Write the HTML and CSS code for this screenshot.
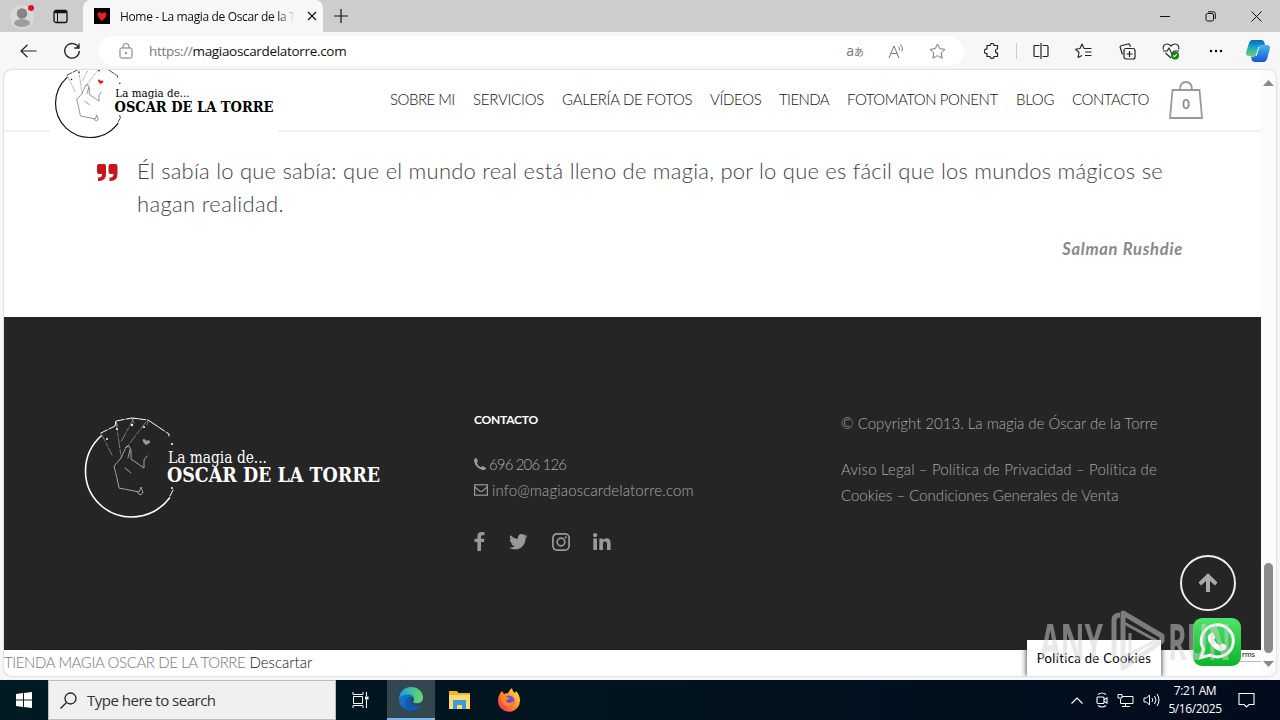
FILE: index.html
```html
<!DOCTYPE html>
<html lang="es">
<head>
  <meta charset="UTF-8" />
  <meta name="viewport" content="width=device-width, initial-scale=1.0"/>
  <title>Home - La magia de Oscar de la Torre</title>
  <link rel="stylesheet" href="styles.css">
</head>
<body>
  <svg class="defs" width="0" height="0">
    <symbol id="logo" viewBox="0 0 298 105">
      <g fill="none" stroke="currentColor" stroke-linecap="round">
        <path d="M17 22C5 33 1.500 45 1.500 57c0 26 21 46 46 46 15 0 29-7 38-19" stroke-width="1.600"/>
        <path d="M86 82l3-6" stroke-width="1"/>
        <path d="M17 19l14-7 1-5 16-3 8 1 8 1 21 14v2" stroke-width="1" stroke-dasharray="7 2 12 1"/>
        <path d="M17 19l11 22M32 8l5 34M50 4L37 28M62 8L42 34M32 8l2 4M48 5l2 4M64 6l-1 5" stroke-width=".4" stroke-dasharray="9 2 4 2"/>
        <path d="M37 44l5-11 3-1 2 4 0 9 13 9 0-8 3-4M37 44l-7 8 3 12 2 10 20 4 2-5 2 6-3 2-3-3M41 54l6 5M46 36l-2 8" stroke-width=".6" stroke-dasharray="6 1 3 1"/>
      </g>
      <path class="logo-heart" d="M62 31c-4-3-4-6-2-6 1 0 2 1 2 2 1-1 4-1 4 1 0 1-2 2-4 3z"/>
      <g fill="currentColor">
        <circle cx="23" cy="25" r="1"/><circle cx="33" cy="15" r="1"/><circle cx="48" cy="11" r="1.2"/><circle cx="60" cy="13" r="1"/>
        <circle cx="88" cy="30" r="1"/><circle cx="88" cy="74" r="1"/>
      </g>
    </symbol>
  </svg>

  <div class="tabbar">
    <svg class="profile" width="26" height="26" viewBox="0 0 26 26"><circle cx="12" cy="14" r="12" fill="#d8d8d8"/><circle cx="12" cy="10.500" r="5.200" fill="#858585"/><ellipse cx="12" cy="20" rx="8" ry="4" fill="#9d9d9d"/><circle cx="21" cy="5" r="3" fill="#e81123"/></svg>
    <svg class="workspaces" width="15" height="15" viewBox="0 0 15 15" fill="none" stroke="#111"><rect x="1" y="1.500" width="13" height="12" rx="2" stroke-width="1.300"/><path d="M1.500 3h12" stroke-width="2.500"/><path d="M4.500 4v9"/></svg>
    <div class="tab">
      <svg width="16" height="16" viewBox="0 0 16 16"><rect width="16" height="16"/><path d="M8 13C5 10 3.500 8.500 3.500 6.500 3.500 4 7 3.500 8 6c1-2.500 4.500-2 4.500.5C12.500 8.500 11 10 8 13z" fill="#ed1c24"/></svg>
      <span class="tab-title">Home - La magia de Oscar de la T</span>
      <svg width="10" height="10" viewBox="0 0 10 10" stroke="#111" stroke-width="1.200"><path d="M1 1l8 8M9 1l-8 8"/></svg>
    </div>
    <svg class="new-tab" width="14" height="14" viewBox="0 0 14 14" stroke="#111" stroke-width="1.200"><path d="M7 0v14M0 7h14"/></svg>
    <div class="window-buttons">
      <svg width="10" height="10" viewBox="0 0 10 10" stroke="#111"><path d="M0 5.500h10"/></svg>
      <svg width="11" height="11" viewBox="0 0 11 11" fill="none" stroke="#111"><rect x="1" y="2.500" width="7.500" height="7.500" rx="1.500"/><path d="M3 .8h5.500q1.800 0 1.800 1.800V8"/></svg>
      <svg width="11" height="11" viewBox="0 0 11 11" stroke="#111"><path d="M.5.5l10 10M10.500.5l-10 10"/></svg>
    </div>
  </div>

  <div class="toolbar">
    <svg class="back" width="17" height="14" viewBox="0 0 17 14" fill="none" stroke="#222" stroke-width="1.200"><path d="M16.500 7H1M7.500.8L1 7l6.500 6.200"/></svg>
    <svg class="reload" width="18" height="18" viewBox="0 0 18 18" fill="none" stroke="#222" stroke-width="1.300"><path d="M15.500 5.500A7.300 7.300 0 1 0 16.300 9M16 1.500v4.500h-4.700"/></svg>
    <div class="address">
      <svg width="14" height="16" viewBox="0 0 14 16" fill="none" stroke="#777"><rect x="1" y="5" width="12" height="10" rx="1.500"/><path d="M4 5V3.500a3 3 0 0 1 6 0V5"/><circle cx="7" cy="10" r=".6" fill="#555"/></svg>
      <div class="url"><span>https://</span>magiaoscardelatorre.com</div>
      <span class="translate">a<small>あ</small></span>
      <svg class="read" width="17" height="16" viewBox="0 0 17 16" fill="none" stroke="#777"><path d="M1 15L6 3l5 12M3 10.500h6.200M10.500 3.500q1.500 1.500.8 4M12.500 1.500q3 3 1.500 7"/></svg>
      <svg class="star" width="17" height="16" viewBox="0 0 17 16" fill="none" stroke="#777" stroke-linejoin="round"><path d="M8.500 1l2.300 4.700 5.200.7-3.800 3.600.9 5.200-4.600-2.500-4.600 2.500.9-5.200L1 6.400l5.200-.7z"/></svg>
    </div>
    <div class="tools">
      <svg width="16" height="16" viewBox="0 0 16 16" fill="none" stroke="#222" stroke-width="1.200" stroke-linejoin="round"><path d="M3 2.500h3a2 2 0 0 1 4 0h3.500V6a2 2 0 0 0 0 4v3.500H10a2 2 0 0 1-4 0H3V10.500a2.300 2.300 0 1 1 0-4.500z"/></svg>
      <i class="divider"></i>
      <svg width="16" height="16" viewBox="0 0 16 16" fill="none" stroke="#222" stroke-width="1.200"><path d="M6.500 2.500H2q-1 0-1 1v9q0 1 1 1h4.500M9.500 2.500H14q1 0 1 1v9q0 1-1 1H9.500M8 0v16"/></svg>
      <svg width="17" height="16" viewBox="0 0 17 16" fill="none" stroke="#222" stroke-width="1.100" stroke-linejoin="round"><path d="M9 5.500L7 1 5 5.500l-4.500.7L4 9.500l-1 5 4-2M9 5.500h7.500M10 9h6.500M10 12.500h6.500"/></svg>
      <svg width="17" height="17" viewBox="0 0 17 17" fill="none" stroke="#222" stroke-width="1.200"><rect x="5" y="5.500" width="11" height="10.500" rx="2"/><path d="M10.500 8v6M7.500 11h6M3.500 11.500L1.200 4.500q-.4-1.300 1-1.800L9 1q1.200-.3 1.700.8l.8 2"/></svg>
      <svg width="18" height="17" viewBox="0 0 18 17" fill="none" stroke="#222" stroke-width="1.100"><path d="M1.300 6.500C.5 3 2.500 1 5 1c2 0 3 1 4 2 1-1 2-2 4-2 2.500 0 4.500 2 3.700 5.500M3.500 10L9 15M1 8h4l2-3 3 6 2-3h5"/><circle cx="13" cy="12.500" r="4" fill="#13801c" stroke="none"/><path d="M11.300 12.500l1.200 1.200 2.300-2.600" stroke="#fff"/></svg>
      <svg class="more" width="14" height="4" viewBox="0 0 14 4"><circle cx="2" cy="2" r="1.200"/><circle cx="7" cy="2" r="1.200"/><circle cx="12" cy="2" r="1.200"/></svg>
      <svg class="copilot" width="24" height="22" viewBox="0 0 24 22"><defs><linearGradient id="cp1" x2="0" y2="1"><stop offset="0" stop-color="#0b63c4"/><stop offset=".45" stop-color="#21a4c4"/><stop offset="1" stop-color="#5dd86b"/></linearGradient><linearGradient id="cp2" x2="0" y2="1"><stop offset="0" stop-color="#45b8ee"/><stop offset="1" stop-color="#1557d6"/></linearGradient></defs><path d="M6 0h9q3 0 3.500 3l.5 2h-3q-2 0-2.500 2l-2 6q-1 3-4 3H3Q-.5 16 .2 12L3 3Q4 0 6 0z" fill="url(#cp1)"/><path d="M18 22H9q-3 0-3.500-3L5 16.500h2.500q2 0 2.500-2l2-6.500q1-3 4-3h5q3.500 0 2.800 4L21 19q-1 3-3 3z" fill="url(#cp2)"/><path d="M13.500 7l-3 9H9.500l3-9z" fill="#fff"/></svg>
    </div>
  </div>

  <div class="viewport">
    <div class="page">
      <header class="site-header">
        <svg class="header-logo" width="228" height="78" viewBox="-5 0 305 105">
          <use href="#logo" width="298" height="105"/>
          <text x="82" y="49" font-size="16" textLength="100" lengthAdjust="spacingAndGlyphs">La magia de...</text>
          <text x="81" y="68" font-size="20" font-weight="bold" textLength="214" lengthAdjust="spacingAndGlyphs">OSCAR DE LA TORRE</text>
        </svg>
        <nav class="menu">
          <a class="m1">SOBRE MI</a>
          <a class="m2">SERVICIOS</a>
          <a class="m3">GALERÍA DE FOTOS</a>
          <a class="m4">VÍDEOS</a>
          <a class="m5">TIENDA</a>
          <a class="m6">FOTOMATON PONENT</a>
          <a class="m7">BLOG</a>
          <a class="m8">CONTACTO</a>
        </nav>
        <div class="cart">
          <svg width="36" height="40" viewBox="0 0 36 40" fill="none" stroke="#999" stroke-width="1.800"><path d="M4.500 10h27l2.500 28h-32zM12 10q0-8 6-8t6 8"/></svg>
          <span>0</span>
        </div>
      </header>

      <section class="quote">
        <svg width="21" height="18" viewBox="0 0 21 18" fill="#c4161c"><path id="q" d="M2 0h5q2 0 2 2v8q0 7-7 7H1v-3.500h1q3 0 3-3.500H2Q0 10 0 8V2Q0 0 2 0z"/><use href="#q" x="11.500"/></svg>
        <div class="quote-body">
          <p><span class="q1">Él sabía lo que sabía: que el mundo real está lleno de magia, por lo que es fácil que los mundos mágicos se</span><br><span class="q2">hagan realidad.</span></p>
          <cite>Salman Rushdie</cite>
        </div>
      </section>

      <footer class="site-footer">
        <div class="footer-brand">
          <svg width="298" height="105" viewBox="0 0 298 105">
            <use href="#logo"/>
            <text x="84" y="49" font-size="16" textLength="99" lengthAdjust="spacingAndGlyphs">La magia de...</text>
            <text x="83" y="68" font-size="20" font-weight="bold" textLength="213" lengthAdjust="spacingAndGlyphs">OSCAR DE LA TORRE</text>
          </svg>
        </div>
        <div class="contact">
          <h4>CONTACTO</h4>
          <p class="phone"><svg width="12" height="12" viewBox="0 0 12 12" fill="#999"><path d="M0 2Q0 .5 2 0l.8.300L4 3.500 2.800 5q1.200 3 4.200 4.200L8.500 8l3.200 1.400q.6.600-.2 2-1.500 1-3.500.3Q1.500 9.500.3 4 0 3 0 2z"/></svg> <span>696 206 126</span></p>
          <p class="mail"><svg width="14" height="12" viewBox="0 0 14 12" fill="none" stroke="#999" stroke-width="1.200"><rect x=".6" y=".8" width="12.800" height="10.400"/><path d="M.8 3l4.700 4q1.500 1 3 0l4.700-4"/></svg> <span>info@magiaoscardelatorre.com</span></p>
          <div class="social">
            <svg width="11" height="19" viewBox="0 0 11 19"><path d="M10.500.2v3H8.700C7.300 3.200 7 3.800 7 4.700v2.100h3.400L10 10H7v9H3.400v-9H.5V6.800h2.900V4.200C3.400 1.400 5.200 0 7.800 0q1.700 0 2.700.2z"/></svg>
            <svg class="tw" width="19" height="16" viewBox="0 0 19 16"><path d="M18.500 2.200l-2 2C16.700 11 11.500 15.500 6 15.500q-3.300 0-6-1.700 3.200.2 5.600-1.600-2.600-.3-3.500-2.700h1.600Q.8 8.500.8 5.300l1.600.5Q0 3.700 1.400.9 4.300 4.400 9 4.700C8.400 2 10.400.1 12.700.1q1.600 0 2.700 1.200l2.300-.9-1.500 2.100z"/></svg>
            <svg class="ig" width="18" height="18" viewBox="0 0 18 18"><rect x=".9" y=".9" width="16.200" height="16.200" rx="4" fill="none" stroke="#999" stroke-width="1.700"/><circle cx="9" cy="9" r="3.800" fill="none" stroke="#999" stroke-width="1.700"/><circle cx="13.700" cy="4.400" r="1.100"/></svg>
            <svg class="in" width="18" height="17" viewBox="0 0 18 17"><path d="M.3 5.500H4V17H.3zM6.300 5.500h3.600v1.600q1.300-1.900 3.700-1.900 4 0 4 5V17H14v-6.200Q14 8.200 12 8.200T9.900 11v6H6.300z"/><circle cx="2.100" cy="2.200" r="2.100"/></svg>
          </div>
        </div>
        <div class="legal">
          <p><span class="l1">© Copyright 2013. La magia de Óscar de la Torre</span></p>
          <p><span class="l2">Aviso Legal – Política de Privacidad – Política de</span><br><span class="l3">Cookies – Condiciones Generales de Venta</span></p>
        </div>
      </footer>

      <div class="store-notice"><span>TIENDA MAGIA OSCAR DE LA TORRE</span> <a>Descartar</a></div>

      <div class="recaptcha">rms</div>
      <div class="cookies">Política de Cookies</div>
      <div class="to-top"><svg width="20" height="20" viewBox="0 0 20 20" fill="none" stroke="#aaa" stroke-width="4"><path d="M10 19V4M1.800 11L10 3l8.200 8"/></svg></div>
      <svg class="whatsapp" width="48" height="48" viewBox="0 0 48 48"><defs><linearGradient id="wa" x2="0" y2="1"><stop offset="0" stop-color="#4fe46a"/><stop offset="1" stop-color="#0cb528"/></linearGradient></defs><rect width="48" height="48" rx="9" fill="url(#wa)"/><path d="M8 39.500l2.600-8.500A16 16 0 1 1 17 37z" fill="none" stroke="#fff" stroke-width="3"/><path d="M18 15q1.500-1 2.500.2l2 4.300-1.500 2.500q2 4 6 5.500l2-2.200 4.500 2.300q0 5-5 5.300-5 0-9.500-5-5.500-6-4-10 1-2 3-2.900z" fill="#fff"/></svg>
    </div>
    <div class="scrollbar">
      <svg width="11" height="6" viewBox="0 0 11 6"><path d="M5.500 0L11 6H0z" fill="#8a8a8a"/></svg>
      <i class="thumb"></i>
      <svg width="11" height="6" viewBox="0 0 11 6"><path d="M5.500 6L11 0H0z" fill="#8a8a8a"/></svg>
    </div>
  </div>

  <div class="taskbar">
    <div class="start"><svg width="16" height="16" viewBox="0 0 16 16" fill="#fff"><path d="M0 2l7-1v6.500H0zM8 .9L16 0v7.500H8zM0 8.500h7V15l-7-1zM8 8.500h8V16l-8-1z"/></svg></div>
    <div class="search"><svg width="17" height="17" viewBox="0 0 17 17" fill="none" stroke="#222" stroke-width="1.300"><circle cx="10.500" cy="6.500" r="5.500"/><path d="M6.500 10.500L.5 16.500"/></svg><span>Type here to search</span></div>
    <div class="app"><svg width="17" height="16" viewBox="0 0 17 16" fill="none" stroke="#fff"><path d="M1 0v2.500h10V0M1.500 4.500h9v7h-9zM1 16v-2.500h10V16M14.500 0v4M14.500 8v8"/><rect x="13.500" y="5" width="2.500" height="2" fill="#fff"/></svg></div>
    <div class="app active"><svg width="24" height="24" viewBox="0 0 24 24"><defs><linearGradient id="e1"><stop offset="0" stop-color="#1b9de2"/><stop offset="1" stop-color="#67dc62"/></linearGradient><linearGradient id="e2" x2="1" y2="1"><stop offset="0" stop-color="#1686d8"/><stop offset="1" stop-color="#104a9a"/></linearGradient></defs><circle cx="12" cy="12" r="12" fill="url(#e2)"/><path d="M.2 10.500C1.500 4 6.500 0 12 0c7 0 12 5 12 10.500 0 4-3 6-6 6-2.500 0-4-1-4-2 0-.6 1-1.200 1-2.700 0-2.500-2.500-4.300-5.500-4.300-4 0-7.500 1-9.300 3z" fill="url(#e1)"/><path d="M22.500 18c-5 2-11 0-11-4.500 0-1.500 1-3 2-3.500-4-1-7 2-7 6 0 4 3 7.500 8 7.500q5-1.500 8-5.500z" fill="#0d5ab4"/><path d="M13.500 10q-2.500 1.500-2 4 1 4.500 7 5 3.500 0 5.500-1.500V13q-2 3.500-6 3.500-4-.5-4-2 2-2 -.5-4.500z" fill="#33474f"/></svg></div>
    <div class="app"><svg width="22" height="20" viewBox="0 0 22 20"><path d="M0 1h8l1.500 2H21v16H0z" fill="#f2b62c"/><path d="M0 5h21v14H0z" fill="#ffdb75"/><path d="M4 19v-8q0-1 1-1h11q1 0 1 1v8h-4v-4H8v4z" fill="#3d9bdc"/></svg></div>
    <div class="app"><svg width="24" height="24" viewBox="0 0 24 24"><defs><linearGradient id="ff" x1="1" x2="0" y2="1"><stop offset="0" stop-color="#fff04a"/><stop offset=".45" stop-color="#ff9823"/><stop offset="1" stop-color="#f31c63"/></linearGradient></defs><path d="M5 3l2 3q2-1 4-.5Q12 2 15 0q0 3 3 5l1-2q4 4 4 9.500A11 11 0 0 1 1 13q0-6 4-10z" fill="url(#ff)"/><circle cx="12" cy="13" r="5.500" fill="#7542e5"/><path d="M4 8q4-1 6 1l3 1q-1 2-4 2 0 3 4 3l4-2q0 5-5 5.500Q4 18 4 8z" fill="#ff8a1c"/></svg></div>
    <div class="tray">
      <svg width="12" height="7" viewBox="0 0 12 7" fill="none" stroke="#fff" stroke-width="1.200"><path d="M.5 6.500L6 1l5.500 5.500"/></svg>
      <svg width="12" height="16" viewBox="0 0 12 16" fill="none" stroke="#fff" stroke-width="1.100"><rect x="1" y="5" width="7" height="6.500" rx="1"/><path d="M8 7.500l3-1.500v5L8 9.500M2 2.500Q6-.5 10 2.500M2 13.500q4 3 8 0"/></svg>
      <svg width="17" height="15" viewBox="0 0 17 15" fill="none" stroke="#fff"><path d="M5 3.500h11v7H3.500V6M8.500 10.500v3M5 13.500h8M1 1.500h4V5H1z"/></svg>
      <svg width="17" height="14" viewBox="0 0 17 14" fill="none" stroke="#fff"><path d="M1 5h2.500l3-3v10l-3-3H1zM9 5q1.500 2 0 4M11.500 3q3 4 0 8M14 1q4 6 0 12"/></svg>
      <div class="clock">7:21 AM<br>5/16/2025</div>
      <svg width="17" height="17" viewBox="0 0 17 17" fill="none" stroke="#fff" stroke-width="1.100"><path d="M1 1.500h15v11h-5L8.500 15 6 12.500H1z"/></svg>
    </div>
  </div>

  <svg class="watermark" width="200" height="66" viewBox="0 0 200 66">
    <text x="2" y="52" textLength="63" lengthAdjust="spacingAndGlyphs">ANY</text>
    <text x="130" y="52" textLength="63" lengthAdjust="spacingAndGlyphs">RUN</text>
    <g fill="none" stroke="#d4d4d4" stroke-width="5" stroke-linejoin="round"><path d="M76 49V12q0-5 6-5M85 5l39 23v5L85 60z"/><path d="M86 15l33 18M92 25v20M86 49l33-17" stroke-width="3"/></g>
  </svg>
</body>
</html>
```

FILE: styles.css
```css
* {
  box-sizing: border-box;
}
body {
  margin: 0;
  width: 1280px;
  height: 720px;
  overflow: hidden;
  display: flex;
  flex-direction: column;
  background: #f7f7f7;
  font-family: "Open Sans", "Noto Sans", sans-serif;
  color: #111;
}
svg {
  display: block;
  flex: none;
}
.defs {
  position: absolute;
}
p {
  margin: 0;
}

/* browser window */
.tabbar {
  height: 32px;
  flex: none;
  display: flex;
  align-items: center;
  background: #cdcdcd;
}
.profile {
  margin-left: 10px;
}
.workspaces {
  margin-left: 17px;
}
.tab {
  width: 240px;
  height: 32px;
  margin-left: 15px;
  padding: 0 11px;
  display: flex;
  align-items: center;
  background: #f7f7f7;
  border-radius: 8px 8px 0 0;
}
.tab-title {
  width: 175px;
  margin: 0 12px 0 10px;
  white-space: nowrap;
  font-size: 12px;
  letter-spacing: -0.35px;
  -webkit-mask-image: linear-gradient(to right, #000 90%, transparent);
  mask-image: linear-gradient(to right, #000 90%, transparent);
}
.new-tab {
  margin-left: 11px;
}
.window-buttons {
  margin-left: auto;
  margin-right: 18px;
  display: flex;
  align-items: center;
  gap: 35px;
}
.toolbar {
  height: 38px;
  flex: none;
  display: flex;
  align-items: center;
}
.back {
  margin-left: 20px;
}
.reload {
  margin-left: 26px;
}
.address {
  width: 865px;
  height: 30px;
  margin-left: 18px;
  padding: 0 18px 0 20px;
  display: flex;
  align-items: center;
  background: #fff;
  border-radius: 15px;
}
.url {
  margin-left: 16px;
  font-size: 13.5px;
  letter-spacing: -0.32px;
}
.url span {
  color: #777;
}
.translate {
  margin-left: auto;
  color: #777;
  font-size: 14px;
  line-height: 16px;
}
.translate small {
  font-family: "Noto Sans CJK JP", sans-serif;
  font-size: 10px;
}
.read {
  margin-left: 24px;
}
.star {
  margin-left: 24px;
}
.tools {
  flex: 1;
  padding: 0 10px 0 20px;
  display: flex;
  align-items: center;
  justify-content: space-between;
}
.divider {
  width: 1px;
  height: 16px;
  margin: 0 -10px;
  background: #ccc;
}
.more {
  margin: 0 -3px 0 3px;
}
.viewport {
  width: 1272px;
  height: 606px;
  flex: none;
  margin-left: 4px;
  display: flex;
  overflow: hidden;
  background: #fff;
  border-radius: 8px;
  box-shadow: 0 0 2px #aaa;
}
.page {
  position: relative;
  width: 1257px;
  flex: none;
  display: flex;
  flex-direction: column;
  font-family: Lato, "Open Sans", sans-serif;
  font-weight: 300;
}
.scrollbar {
  flex: 1;
  padding: 10px 0 9px;
  display: flex;
  flex-direction: column;
  align-items: center;
  background: #fcfcfc;
}
.thumb {
  width: 9px;
  height: 90px;
  margin: auto 0 8px;
  border-radius: 5px;
  background: #8b8b8b;
}

/* site header */
.site-header {
  height: 61px;
  flex: none;
  display: flex;
  align-items: flex-start;
  border-bottom: 1px solid #ededed;
  box-shadow: 0 1px 1px #f4f4f4;
}
.header-logo {
  --heart: #ed1c24;
  margin: -9px 0 0 46px;
  background: #fff;
}
.header-logo, .footer-brand {
  font-family: "DejaVu Serif Condensed", "DejaVu Serif", serif;
  font-weight: 400;
}
.logo-heart {
  fill: var(--heart);
}
.menu {
  margin-left: 112px;
  padding-top: 19px;
  display: flex;
  gap: 18px;
  font-size: 15px;
  line-height: 20px;
  white-space: nowrap;
}
.m1 { width: 65px; letter-spacing: -0.5px; }
.m2 { width: 71px; letter-spacing: -0.25px; }
.m3 { width: 130px; letter-spacing: -0.32px; }
.m4 { width: 51px; letter-spacing: -0.35px; }
.m5 { width: 50px; letter-spacing: -0.6px; }
.m6 { width: 151px; letter-spacing: -0.45px; }
.m7 { width: 38px; letter-spacing: -0.3px; }
.m8 { width: 77px; letter-spacing: -0.45px; }
.cart {
  margin: 10px 0 0 19px;
  display: grid;
}
.cart > * {
  grid-area: 1 / 1;
}
.cart span {
  align-self: center;
  justify-self: center;
  padding-top: 7px;
  color: #888;
  font-size: 13px;
  font-weight: 700;
}

/* quote */
.quote {
  height: 186px;
  flex: none;
  padding: 33px 78px 0 93px;
  display: flex;
  gap: 19px;
}
.quote-body {
  flex: 1;
  margin-top: -10px;
  display: flex;
  flex-direction: column;
  color: #444;
  font-size: 22px;
  line-height: 33px;
  white-space: nowrap;
}
.q1 {
  letter-spacing: 0.23px;
}
.q2 {
  letter-spacing: 0.35px;
}
cite {
  margin-top: 13px;
  align-self: flex-end;
  color: #888;
  font-size: 16.5px;
  font-weight: 700;
  letter-spacing: 0.75px;
}

/* footer */
.site-footer {
  height: 333px;
  flex: none;
  padding: 92px 80px 0;
  display: grid;
  grid-template-columns: 390px 367px 1fr;
  background: #252525;
  color: #aaa;
  font-size: 15px;
  line-height: 26px;
  white-space: nowrap;
}
.footer-brand {
  --heart: #999;
  padding-top: 5px;
  color: #fff;
  fill: #fff;
}
.contact h4 {
  margin: 0 0 32px;
  color: #fff;
  font-size: 12px;
  font-weight: 700;
  line-height: 21px;
  letter-spacing: -0.2px;
}
.contact p {
  display: flex;
  align-items: center;
  gap: 3px;
}
.contact .phone {
  margin-top: -11px;
}
.phone span {
  letter-spacing: -0.85px;
}
.contact .mail {
  gap: 4px;
}
.mail span {
  letter-spacing: 0.15px;
}
.social {
  margin-top: 29px;
  display: flex;
  align-items: center;
  fill: #999;
}
.tw { margin-left: 24px; }
.ig { margin-left: 24px; }
.in { margin-left: 23px; }
.legal p {
  margin: 1px 0 20px;
}
.l2 {
  letter-spacing: 0.16px;
}
.store-notice {
  height: 27px;
  color: #777;
  font-size: 15px;
  line-height: 25px;
  white-space: nowrap;
}
.store-notice span {
  letter-spacing: -0.4px;
}
.store-notice a {
  color: #111;
}

/* floating widgets */
.recaptcha {
  position: absolute;
  right: 0;
  top: 580px;
  width: 24px;
  height: 12px;
  padding-right: 6px;
  background: #fff;
  border-bottom: 1px solid #bbb;
  font-size: 8px;
  line-height: 9px;
  font-weight: 400;
  text-align: right;
}
.cookies {
  position: absolute;
  left: 1023px;
  top: 570px;
  width: 134px;
  height: 37px;
  background: #fff;
  box-shadow: 0 0 6px #222;
  color: #000;
  font-size: 13px;
  font-weight: 400;
  line-height: 37px;
  letter-spacing: 0.35px;
  text-align: center;
}
.to-top {
  position: absolute;
  left: 1176px;
  top: 485px;
  width: 56px;
  height: 56px;
  display: flex;
  align-items: center;
  justify-content: center;
  border: 2px solid #eee;
  border-radius: 50%;
}
.whatsapp {
  position: absolute;
  left: 1189px;
  top: 548px;
}
.watermark {
  position: absolute;
  left: 1038px;
  top: 608px;
  opacity: 0.5;
  fill: #d4d4d4;
  font-family: "Open Sans", sans-serif;
  font-size: 51px;
  font-weight: 700;
}

/* windows taskbar */
.taskbar {
  height: 40px;
  flex: none;
  margin-top: 4px;
  display: flex;
  background: linear-gradient(to right, #001a22, #020c1c);
}
.start {
  width: 48px;
  display: flex;
  align-items: center;
  justify-content: center;
}
.search {
  width: 288px;
  padding-left: 11px;
  display: flex;
  align-items: center;
  gap: 10px;
  background: #f0f0f0;
  border: 1px solid #bbb;
  color: #333;
  font-size: 15px;
  letter-spacing: -0.5px;
}
.app {
  width: 49px;
  display: flex;
  align-items: center;
  justify-content: center;
}
.active {
  width: 48px;
  margin-left: 2px;
  background: #33474f;
  border-bottom: 2px solid #76b9ed;
}
.tray {
  margin-left: auto;
  padding-right: 25px;
  display: flex;
  align-items: center;
  color: #fff;
}
.tray svg + svg {
  margin-left: 9px;
}
.tray svg:first-child {
  margin-right: 4px;
}
.clock {
  width: 70px;
  margin-right: 8px;
  font-size: 12px;
  line-height: 18px;
  letter-spacing: -0.4px;
  text-align: center;
}
```
